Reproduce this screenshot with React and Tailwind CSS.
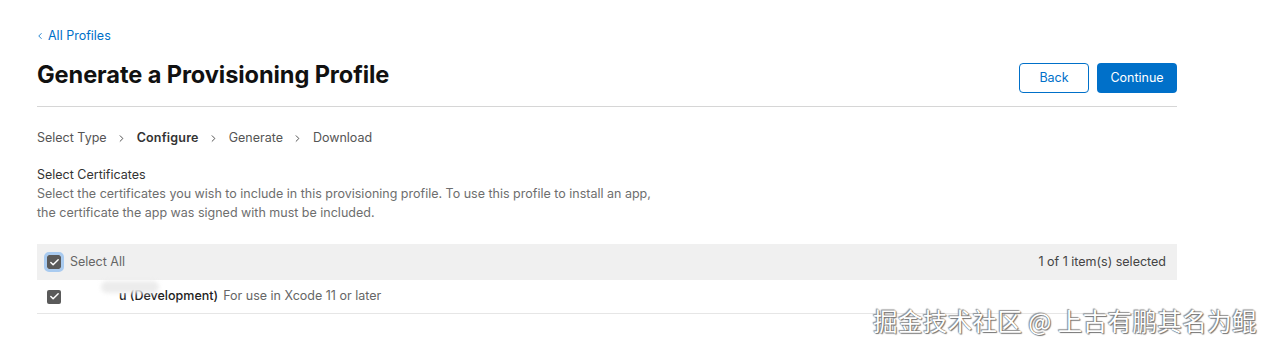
import { ChevronLeft, ChevronRight, Check } from "lucide-react"

const steps = ["Select Type", "Configure", "Generate", "Download"]

function Box({ ring }) {
  return (
    <span
      className={
        "flex h-[14px] w-[14px] items-center justify-center rounded-[2px] bg-[#5a5a5a] " +
        (ring ? "outline-[3px] outline-solid outline-[#a9cbf0]" : "")
      }
    >
      <Check size={11} strokeWidth={3.2} className="text-white" />
    </span>
  )
}

export default function App() {
  return (
    <div className="relative h-[349px] w-[1273px] overflow-hidden bg-white font-['Inter','Liberation_Sans',sans-serif] text-[#333]">
      <div className="ml-[37px] w-[1140px] pt-[28px]">
        <a className="flex items-center text-[12.5px] leading-[16px] text-[#0070c9]">
          <ChevronLeft size={10} strokeWidth={2} className="mr-[3px] -ml-[2px]" />
          All Profiles
        </a>

        <div className="mt-[15px] flex items-start justify-between border-b border-[#d6d6d6] pb-[13px]">
          <h1 className="text-[23.6px] font-bold leading-[32px] tracking-[-0.1px] text-[#111]">
            Generate a Provisioning Profile
          </h1>
          <div className="mt-[4px] flex gap-[8px]">
            <button className="h-[30px] w-[70px] rounded-[4px] border border-[#0070c9] text-[12.5px] text-[#0070c9]">
              Back
            </button>
            <button className="h-[30px] w-[80px] rounded-[4px] bg-[#0070c9] text-[12.5px] text-white">
              Continue
            </button>
          </div>
        </div>

        <div className="mt-[22px] flex items-center text-[12.5px] leading-[18px] text-[#555]">
          {steps.map((s, i) => (
            <div key={s} className="flex items-center">
              {i > 0 && <ChevronRight size={11} strokeWidth={2} className="mx-[9.5px] text-[#444]" />}
              <span className={s === "Configure" ? "font-semibold tracking-[0.2px] text-[#333]" : ""}>{s}</span>
            </div>
          ))}
        </div>

        <div className="mt-[19px] text-[12.5px] leading-[18px] text-[#333]">Select Certificates</div>
        <p className="text-[12.5px] leading-[19px] text-[#6e6e6e]">
          Select the certificates you wish to include in this provisioning profile. To use this profile to install an app,
          <br />
          the certificate the app was signed with must be included.
        </p>

        <div className="mt-[22px] flex h-[36px] items-center justify-between bg-[#f0f0f0] pl-[10px] pr-[11px] text-[12.5px]">
          <div className="flex items-center gap-[9px]">
            <Box ring />
            <span className="text-[#666]">Select All</span>
          </div>
          <span className="text-[#444]">1 of 1 item(s) selected</span>
        </div>

        <div className="relative flex h-[34px] items-center border-b border-[#e6e6e6] pl-[10px] text-[12.5px]">
          <Box />
          <span className="ml-[58px] font-medium text-[#222]">u (Development)</span>
          <span className="ml-[5px] text-[#666]">For use in Xcode 11 or later</span>
          <div className="absolute left-[64px] top-[1px] h-[12px] w-[58px] rounded-full bg-[#ececec] blur-[2px]" />
        </div>
      </div>

      <div className="absolute left-[873px] top-[304px] text-[24.5px] leading-[34px] tracking-[0.4px] text-white [text-shadow:0_0_1px_#555,1px_1px_1px_#777,-1px_-1px_1px_#999] font-['Noto_Sans_CJK_SC',sans-serif]">
        掘金技术社区 @ 上古有鹏其名为鲲
      </div>
    </div>
  )
}
